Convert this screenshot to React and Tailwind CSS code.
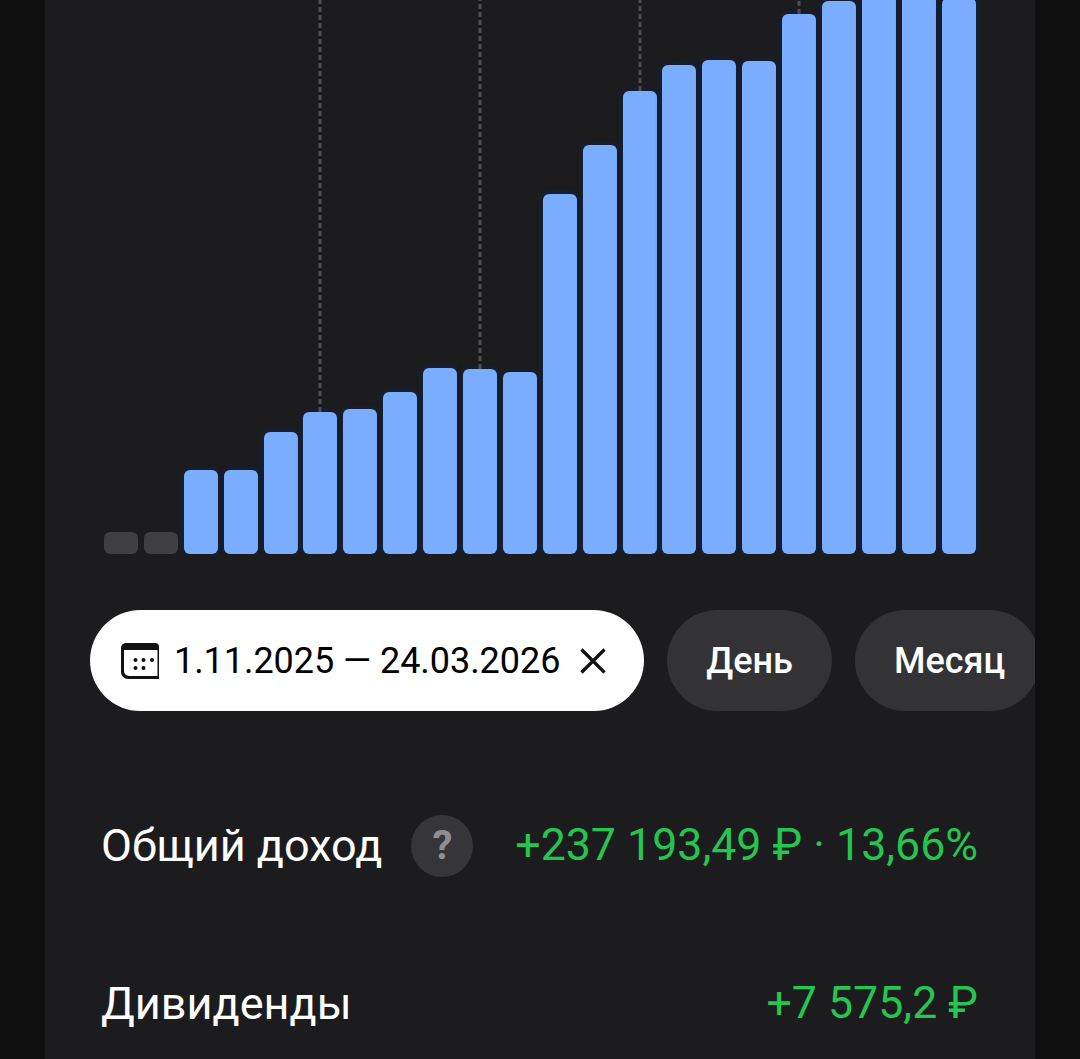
import React from 'react';

const font = { fontFamily: 'Roboto, "Noto Sans", sans-serif' };

// top edge of every bar in the picture, the baseline sits at 554
const bars = [
    { top: 532, muted: true },
    { top: 532, muted: true },
    { top: 470 },
    { top: 470 },
    { top: 432 },
    { top: 412, line: true },
    { top: 409 },
    { top: 392 },
    { top: 368 },
    { top: 369, line: true },
    { top: 372 },
    { top: 194 },
    { top: 145 },
    { top: 91, line: true },
    { top: 65 },
    { top: 60 },
    { top: 61 },
    { top: 14, line: true },
    { top: 1 },
    { top: -10 },
    { top: -10 },
    { top: -2 },
];

const CalendarIcon = () => (
    <svg width="38" height="36" viewBox="0 0 38 36" className="shrink-0">
        <path d="M5 0h29a4 4 0 0 1 4 4v32H7a7 7 0 0 1-7-7V5a5 5 0 0 1 5-5z" fill="#111" />
        <path d="M3 7h33.500v26H8a5 5 0 0 1-5-5z" fill="#fff" />
        <circle cx="14.500" cy="17" r="2" fill="#111" />
        <circle cx="22.500" cy="17" r="2" fill="#111" />
        <circle cx="31" cy="17" r="2" fill="#111" />
        <circle cx="14.500" cy="25" r="2" fill="#111" />
        <circle cx="22.500" cy="25" r="2" fill="#111" />
    </svg>
);

const CloseIcon = () => (
    <svg width="26" height="26" viewBox="0 0 26 26" fill="none" stroke="#111" strokeWidth="3.2" className="shrink-0">
        <path d="M1.500 1.500l23 23M24.500 1.500l-23 23" />
    </svg>
);

const Bar = ({ top, muted, line }) => (
    <div
        className={`relative w-[34px] shrink-0 rounded-[6px] ${muted ? 'bg-[#3f3f41]' : 'bg-[#7aadff] shadow-[0_0_4px_2px_#12203a]'}`}
        style={{ height: 554 - top }}
    >
        {line && (
            <div className="absolute bottom-full left-1/2 h-[420px] w-[3px] -translate-x-1/2 bg-[repeating-linear-gradient(to_top,#4e4e51_0_5px,transparent_5px_8px)]" />
        )}
    </div>
);

const App = () => {
    return (
        <div className="h-[1059px] w-full overflow-hidden bg-[#0f0f0f]" style={font}>
            <div className="mx-[45px] h-full overflow-hidden bg-[#1c1c1e]">
                <div className="flex h-[554px] items-end gap-[5.9px] overflow-hidden pl-[59px]">
                    {bars.map((bar, i) => (
                        <Bar key={i} {...bar} />
                    ))}
                </div>

                <div className="mt-[56px] flex gap-[23px] pl-[45px]">
                    <div className="flex h-[101px] w-[554px] shrink-0 items-center rounded-full bg-white pl-[31px] text-black">
                        <CalendarIcon />
                        <span className="ml-[15px] text-[36px] tracking-[-0.05px] whitespace-nowrap">1.11.2025 — 24.03.2026</span>
                        <span className="ml-[20px]"><CloseIcon /></span>
                    </div>
                    <div className="flex h-[101px] w-[165px] shrink-0 items-center justify-center rounded-full bg-[#333335] text-[36px] font-medium text-white">День</div>
                    <div className="flex h-[101px] w-[185px] shrink-0 items-center justify-center rounded-full bg-[#333335] pl-[4px] text-[36px] font-medium text-white">Месяц</div>
                </div>

                <div className="mt-[104px] flex h-[62px] items-center justify-between pr-[57px] pl-[56px] text-[45px] whitespace-nowrap">
                    <div className="flex items-center">
                        <span className="text-white">Общий доход</span>
                        <span className="ml-[29px] flex h-[62px] w-[62px] items-center justify-center rounded-full bg-[#36363a] text-[40px] font-bold text-[#8e8e93]">?</span>
                    </div>
                    <span className="text-[44.7px] text-[#24c550]">+237 193,49 ₽ · 13,66%</span>
                </div>

                <div className="mt-[96px] flex h-[62px] items-center justify-between pr-[57px] pl-[56px] text-[45px] whitespace-nowrap">
                    <span className="text-white">Дивиденды</span>
                    <span className="text-[44.7px] text-[#24c550]">+7 575,2 ₽</span>
                </div>
            </div>
        </div>
    );
};

export default App;
